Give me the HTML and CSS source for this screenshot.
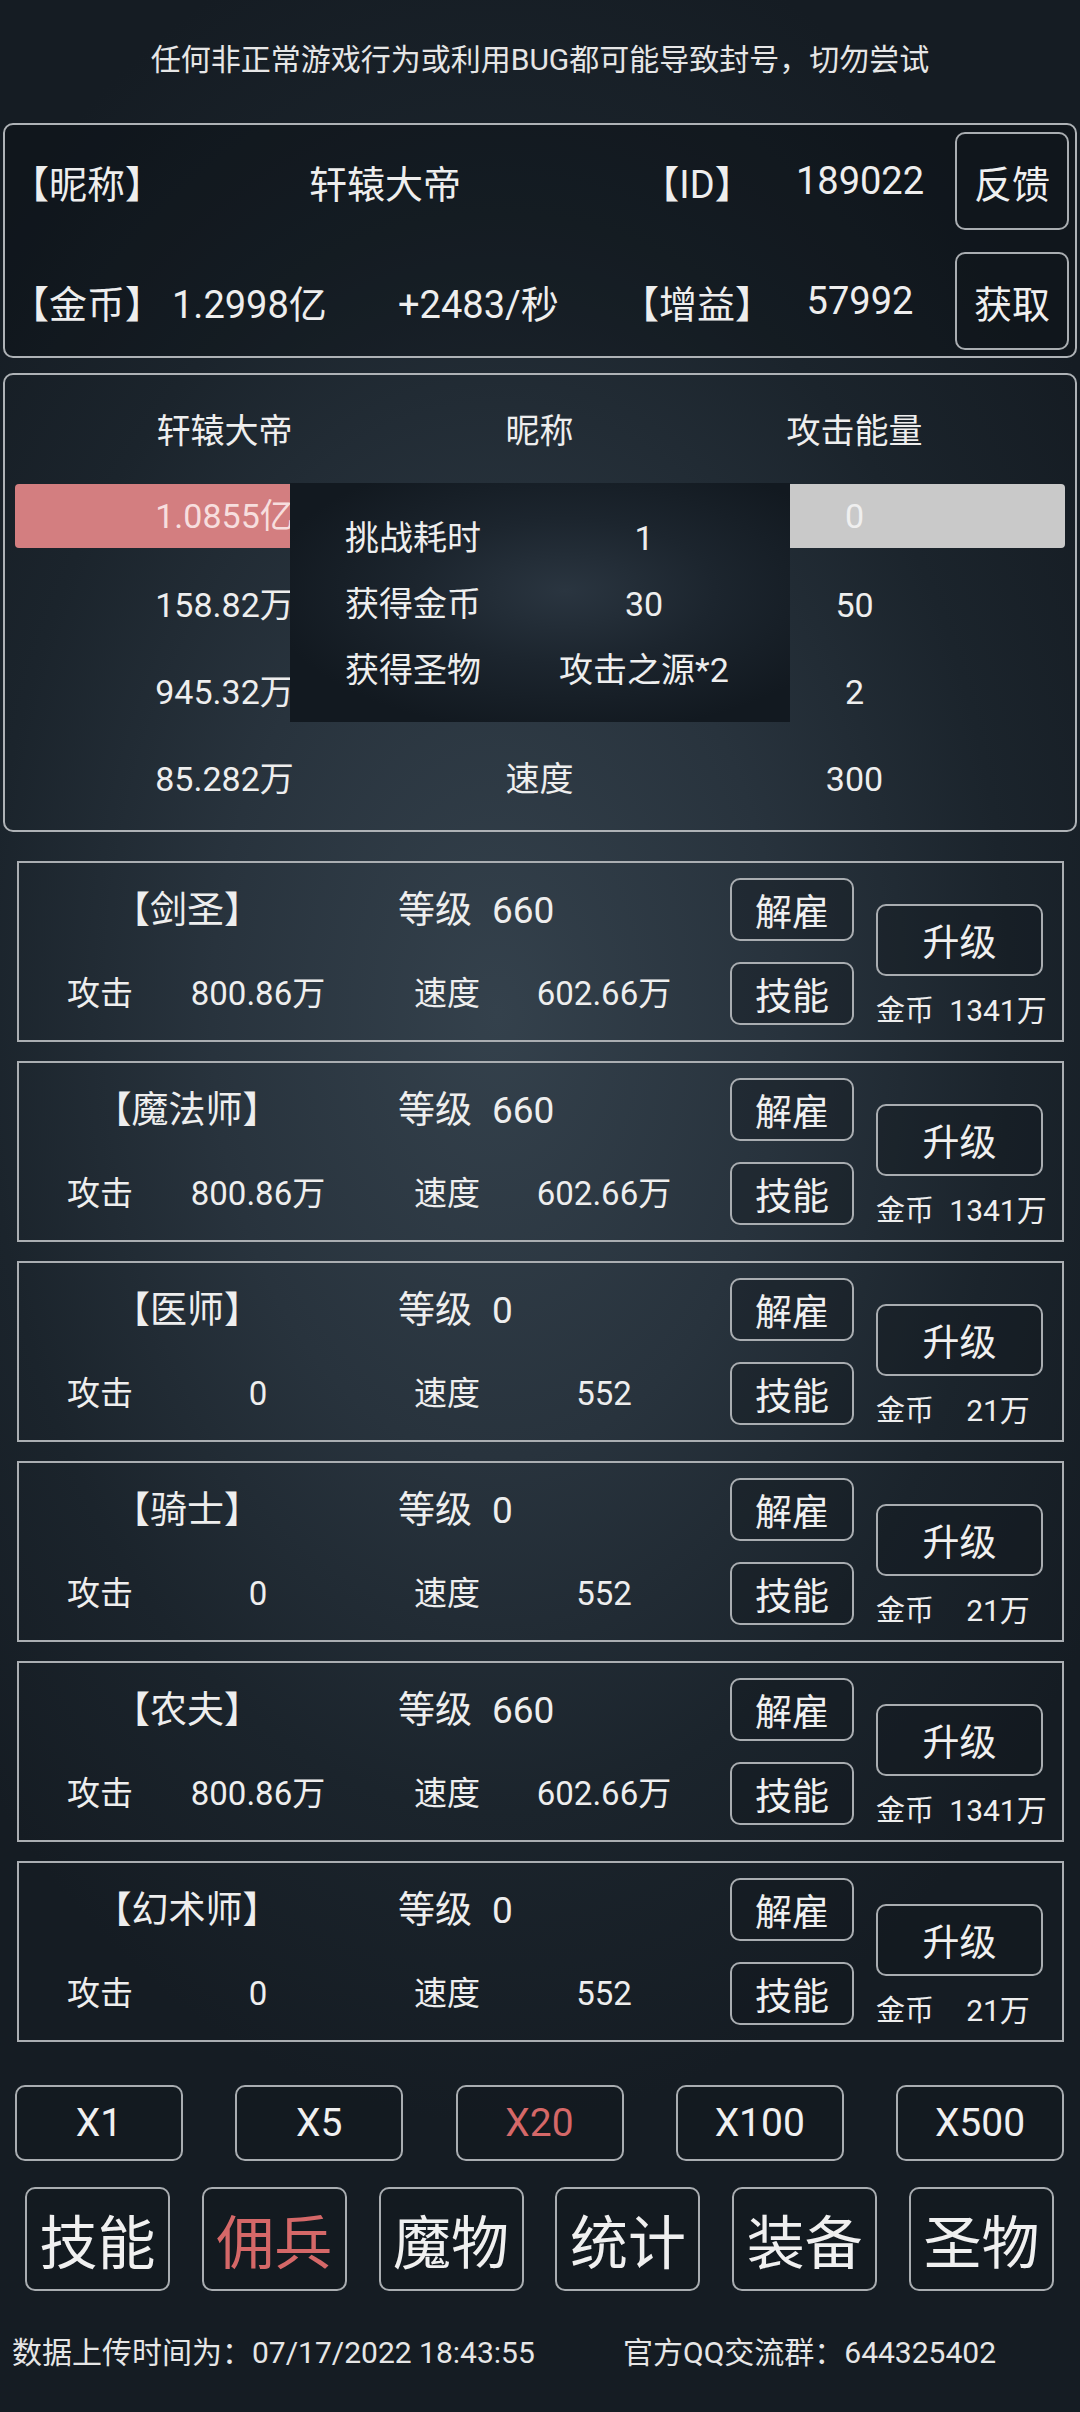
FILE: index.html
```html
<!DOCTYPE html>
<html>
  <head>
    <meta charset="utf-8">
    <title>佣兵</title>
    <link rel="stylesheet" href="styles.css">
  </head>
  <body>
    <div class="notice">任何非正常游戏行为或利用BUG都可能导致封号，切勿尝试</div>

    <!-- player info -->
    <div class="player">
      <div class="player-row">
        <span class="p-label">【昵称】</span>
        <span class="p-name">轩辕大帝</span>
        <span class="p-tag">【ID】</span>
        <span class="p-value">189022</span>
        <button class="btn p-btn">反馈</button>
      </div>
      <div class="player-row">
        <span class="p-label">【金币】</span>
        <span class="p-gold">1.2998亿</span>
        <span class="p-rate">+2483/秒</span>
        <span class="p-tag">【增益】</span>
        <span class="p-value">57992</span>
        <button class="btn p-btn">获取</button>
      </div>
    </div>

    <!-- battle panel -->
    <div class="battle">
      <div class="b-row">
        <span>轩辕大帝</span><span>昵称</span><span>攻击能量</span>
      </div>
      <div class="b-row b-bar">
        <span class="bar-left">1.0855亿</span><span></span><span class="bar-right">0</span>
      </div>
      <div class="b-row">
        <span>158.82万</span><span></span><span>50</span>
      </div>
      <div class="b-row">
        <span>945.32万</span><span></span><span>2</span>
      </div>
      <div class="b-row">
        <span>85.282万</span><span>速度</span><span>300</span>
      </div>

      <div class="result">
        <span>挑战耗时</span><span>1</span>
        <span>获得金币</span><span>30</span>
        <span>获得圣物</span><span>攻击之源*2</span>
      </div>
    </div>

    <!-- hero list -->
    <div class="hero">
      <div class="hero-info">
        <div class="hero-top">
          <span class="hero-name">【剑圣】</span>
          <span class="hero-level">等级<span class="lv">660</span></span>
        </div>
        <div class="hero-stats">
          <span class="st-a">攻击</span>
          <span class="st-b">800.86万</span>
          <span class="st-c">速度</span>
          <span class="st-d">602.66万</span>
        </div>
      </div>
      <div class="hero-btns">
        <button class="btn btn-sm">解雇</button>
        <button class="btn btn-sm">技能</button>
      </div>
      <div class="hero-up">
        <button class="btn btn-up">升级</button>
        <div class="hero-cost"><span class="cost-label">金币</span><span class="cost-val">1341万</span></div>
      </div>
    </div>

    <div class="hero">
      <div class="hero-info">
        <div class="hero-top">
          <span class="hero-name">【魔法师】</span>
          <span class="hero-level">等级<span class="lv">660</span></span>
        </div>
        <div class="hero-stats">
          <span class="st-a">攻击</span>
          <span class="st-b">800.86万</span>
          <span class="st-c">速度</span>
          <span class="st-d">602.66万</span>
        </div>
      </div>
      <div class="hero-btns">
        <button class="btn btn-sm">解雇</button>
        <button class="btn btn-sm">技能</button>
      </div>
      <div class="hero-up">
        <button class="btn btn-up">升级</button>
        <div class="hero-cost"><span class="cost-label">金币</span><span class="cost-val">1341万</span></div>
      </div>
    </div>

    <div class="hero">
      <div class="hero-info">
        <div class="hero-top">
          <span class="hero-name">【医师】</span>
          <span class="hero-level">等级<span class="lv">0</span></span>
        </div>
        <div class="hero-stats">
          <span class="st-a">攻击</span>
          <span class="st-b">0</span>
          <span class="st-c">速度</span>
          <span class="st-d">552</span>
        </div>
      </div>
      <div class="hero-btns">
        <button class="btn btn-sm">解雇</button>
        <button class="btn btn-sm">技能</button>
      </div>
      <div class="hero-up">
        <button class="btn btn-up">升级</button>
        <div class="hero-cost"><span class="cost-label">金币</span><span class="cost-val">21万</span></div>
      </div>
    </div>

    <div class="hero">
      <div class="hero-info">
        <div class="hero-top">
          <span class="hero-name">【骑士】</span>
          <span class="hero-level">等级<span class="lv">0</span></span>
        </div>
        <div class="hero-stats">
          <span class="st-a">攻击</span>
          <span class="st-b">0</span>
          <span class="st-c">速度</span>
          <span class="st-d">552</span>
        </div>
      </div>
      <div class="hero-btns">
        <button class="btn btn-sm">解雇</button>
        <button class="btn btn-sm">技能</button>
      </div>
      <div class="hero-up">
        <button class="btn btn-up">升级</button>
        <div class="hero-cost"><span class="cost-label">金币</span><span class="cost-val">21万</span></div>
      </div>
    </div>

    <div class="hero">
      <div class="hero-info">
        <div class="hero-top">
          <span class="hero-name">【农夫】</span>
          <span class="hero-level">等级<span class="lv">660</span></span>
        </div>
        <div class="hero-stats">
          <span class="st-a">攻击</span>
          <span class="st-b">800.86万</span>
          <span class="st-c">速度</span>
          <span class="st-d">602.66万</span>
        </div>
      </div>
      <div class="hero-btns">
        <button class="btn btn-sm">解雇</button>
        <button class="btn btn-sm">技能</button>
      </div>
      <div class="hero-up">
        <button class="btn btn-up">升级</button>
        <div class="hero-cost"><span class="cost-label">金币</span><span class="cost-val">1341万</span></div>
      </div>
    </div>

    <div class="hero">
      <div class="hero-info">
        <div class="hero-top">
          <span class="hero-name">【幻术师】</span>
          <span class="hero-level">等级<span class="lv">0</span></span>
        </div>
        <div class="hero-stats">
          <span class="st-a">攻击</span>
          <span class="st-b">0</span>
          <span class="st-c">速度</span>
          <span class="st-d">552</span>
        </div>
      </div>
      <div class="hero-btns">
        <button class="btn btn-sm">解雇</button>
        <button class="btn btn-sm">技能</button>
      </div>
      <div class="hero-up">
        <button class="btn btn-up">升级</button>
        <div class="hero-cost"><span class="cost-label">金币</span><span class="cost-val">21万</span></div>
      </div>
    </div>

    <!-- multiplier -->
    <div class="mult">
      <button class="btn btn-mult">X1</button>
      <button class="btn btn-mult">X5</button>
      <button class="btn btn-mult active">X20</button>
      <button class="btn btn-mult">X100</button>
      <button class="btn btn-mult">X500</button>
    </div>

    <!-- tabs -->
    <div class="nav">
      <button class="btn btn-nav">技能</button>
      <button class="btn btn-nav active">佣兵</button>
      <button class="btn btn-nav">魔物</button>
      <button class="btn btn-nav">统计</button>
      <button class="btn btn-nav">装备</button>
      <button class="btn btn-nav">圣物</button>
    </div>

    <div class="footer">
      <span class="upload">数据上传时间为：07/17/2022 18:43:55</span>
      <span>官方QQ交流群：644325402</span>
    </div>
  </body>
</html>
```

FILE: styles.css
```css
* {
  box-sizing: border-box;
}

body {
  margin: 0;
  width: 1080px;
  min-height: 2412px;
  font-family: Roboto, "Noto Sans CJK SC", sans-serif;
  color: #eeeeee;
  background-color: #151c23;
  background-image: radial-gradient(ellipse 66% 46% at 46% 42%, #34414c 0%, #28333d 40%, #1b242c 72%, #151c23 100%);
  white-space: nowrap;
}

.btn {
  font-family: inherit;
  color: #f0f0f0;
  background: rgba(16, 22, 28, 0.35);
  border: 2px solid #a9adb1;
  border-radius: 10px;
  padding: 0;
  cursor: pointer;
}

.notice {
  height: 123px;
  line-height: 120px;
  text-align: center;
  font-size: 30px;
  color: #e6e6e6;
}

/* player panel */
.player {
  margin-left: 3px;
  width: 1074px;
  height: 235px;
  padding: 7px 6px 0;
  border: 2px solid #aeb2b6;
  border-radius: 10px;
  background: rgba(4, 8, 12, 0.28);
}

.player-row {
  display: flex;
  align-items: center;
  height: 98px;
  font-size: 38px;
}

.player-row + .player-row {
  margin-top: 22px;
}

.p-label {
  width: 155px;
}

.p-name {
  width: 438px;
  text-align: center;
}

.p-gold {
  width: 232px;
  padding-left: 6px;
}

.p-rate {
  width: 206px;
}

.p-tag {
  width: 186px;
  text-align: center;
}

.p-value {
  width: 140px;
  text-align: center;
}

.p-btn {
  margin-left: 25px;
  width: 114px;
  height: 98px;
  font-size: 38px;
}

/* battle panel */
.battle {
  position: relative;
  margin: 15px 0 0 3px;
  width: 1074px;
  height: 459px;
  padding: 13px 0 7px;
  border: 2px solid #aeb2b6;
  border-radius: 10px;
  font-size: 34px;
}

.b-row {
  display: grid;
  grid-template-columns: 315px 315px 315px;
  padding-left: 62px;
  height: 87px;
  line-height: 87px;
  text-align: center;
}

.b-bar {
  margin: 9px 10px 14px;
  height: 64px;
  line-height: 64px;
  padding-left: 52px;
  border-radius: 4px;
  background: linear-gradient(to right, #d37e80 52%, #c9c9c9 52%);
}

.bar-left {
  color: #f7dede;
}

.bar-right {
  color: #efefef;
}

.result {
  position: absolute;
  left: 285px;
  top: 108px;
  width: 500px;
  height: 239px;
  padding-top: 22px;
  display: grid;
  grid-template-columns: 246px 216px;
  grid-auto-rows: 66px;
  line-height: 66px;
  text-align: center;
  background: radial-gradient(ellipse 60% 60% at 55% 45%, #2a3540 0%, #1c252e 50%, #121920 100%);
}

/* hero cards */
.hero {
  display: flex;
  align-items: center;
  margin: 0 0 19px 17px;
  width: 1047px;
  height: 181px;
  border: 2px solid #aaaeb2;
}

.battle + .hero {
  margin-top: 29px;
}

.hero-info {
  width: 711px;
  padding-left: 2px;
}

.hero-top {
  display: flex;
  height: 83px;
  line-height: 83px;
  font-size: 37px;
}

.hero-name {
  width: 332px;
  text-align: center;
}

.hero-level {
  margin-left: 45px;
}

.lv {
  margin-left: 20px;
}

.hero-stats {
  display: flex;
  height: 83px;
  line-height: 83px;
  font-size: 33px;
  text-align: center;
}

.st-a,
.st-b {
  width: 158px;
}

.st-c {
  margin-left: 28px;
  width: 164px;
}

.st-d {
  width: 150px;
}

.hero-btns {
  display: flex;
  flex-direction: column;
  gap: 21px;
  width: 124px;
}

.btn-sm {
  height: 63px;
  font-size: 37px;
}

.hero-up {
  align-self: flex-start;
  margin: 41px 0 0 22px;
  width: 167px;
}

.btn-up {
  width: 167px;
  height: 72px;
  font-size: 37px;
}

.hero-cost {
  display: flex;
  margin-top: 18px;
  line-height: 34px;
  font-size: 29px;
}

.cost-label {
  flex-shrink: 0;
  width: 58px;
}

.cost-val {
  flex-shrink: 0;
  width: 128px;
  text-align: center;
  font-size: 30px;
}

/* multiplier + tabs */
.mult {
  display: flex;
  justify-content: space-between;
  margin: 43px 16px 0 15px;
}

.btn-mult {
  width: 168px;
  height: 76px;
  font-size: 39px;
}

.nav {
  display: flex;
  justify-content: space-between;
  margin: 26px 26px 0 25px;
}

.btn-nav {
  width: 145px;
  height: 104px;
  font-size: 58px;
}

.active {
  color: #d56868;
}

.footer {
  display: flex;
  margin-top: 42px;
  padding-left: 12px;
  line-height: 40px;
  font-size: 30px;
  color: #e6e6e6;
}

.upload {
  width: 611px;
}
```
